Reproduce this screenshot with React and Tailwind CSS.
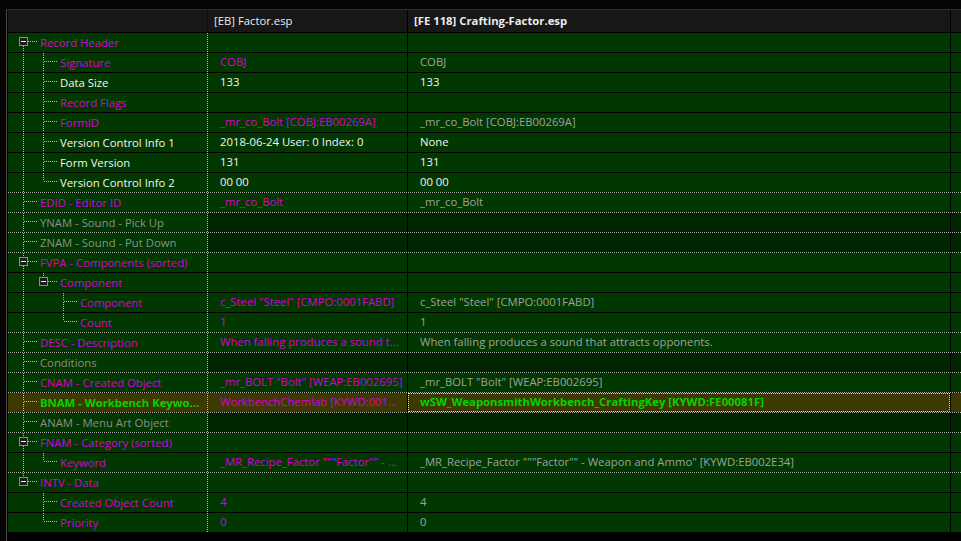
import React from "react";

const M = "text-[#d800d8]";
const W = "text-[#f4f4f4]";
const G = "text-[#a0a0a0]";
const L = "text-[#8e8e8e]";
const GB = "text-[#00d400] font-bold";

const ROWS = [
  { d: 0, label: "Record Header", lc: M },
  { d: 1, label: "Signature", lc: M, v2: "COBJ", c2: M, v3: "COBJ", c3: G },
  { d: 1, label: "Data Size", lc: W, v2: "133", c2: W, v3: "133", c3: W },
  { d: 1, label: "Record Flags", lc: M },
  { d: 1, label: "FormID", lc: M, v2: "_mr_co_Bolt [COBJ:EB00269A]", c2: M, v3: "_mr_co_Bolt [COBJ:EB00269A]", c3: G },
  { d: 1, label: "Version Control Info 1", lc: W, v2: "2018-06-24 User: 0 Index: 0", c2: W, v3: "None", c3: W },
  { d: 1, label: "Form Version", lc: W, v2: "131", c2: W, v3: "131", c3: W },
  { d: 1, label: "Version Control Info 2", lc: W, v2: "00 00", c2: W, v3: "00 00", c3: W },
  { d: 0, label: "EDID - Editor ID", lc: M, v2: "_mr_co_Bolt", c2: M, v3: "_mr_co_Bolt", c3: G },
  { d: 0, label: "YNAM - Sound - Pick Up", lc: L, dim: true },
  { d: 0, label: "ZNAM - Sound - Put Down", lc: L, dim: true },
  { d: 0, label: "FVPA - Components (sorted)", lc: M },
  { d: 1, label: "Component", lc: M },
  { d: 2, label: "Component", lc: M, v2: 'c_Steel "Steel" [CMPO:0001FABD]', c2: M, v3: 'c_Steel "Steel" [CMPO:0001FABD]', c3: G },
  { d: 2, label: "Count", lc: M, v2: "1", c2: M, v3: "1", c3: G },
  {
    d: 0,
    label: "DESC - Description",
    lc: M,
    v2: "When falling produces a sound t...",
    c2: M,
    v3: "When falling produces a sound that attracts opponents.",
    c3: G,
  },
  { d: 0, label: "Conditions", lc: L, dim: true },
  { d: 0, label: "CNAM - Created Object", lc: M, v2: '_mr_BOLT "Bolt" [WEAP:EB002695]', c2: M, v3: '_mr_BOLT "Bolt" [WEAP:EB002695]', c3: G },
  {
    d: 0,
    label: "BNAM - Workbench Keywo...",
    lc: GB,
    v2: "WorkbenchChemlab [KYWD:001...",
    c2: M,
    v3: "wSW_WeaponsmithWorkbench_CraftingKey [KYWD:FE00081F]",
    c3: GB,
    hot: true,
  },
  { d: 0, label: "ANAM - Menu Art Object", lc: L, dim: true },
  { d: 0, label: "FNAM - Category (sorted)", lc: M },
  {
    d: 1,
    label: "Keyword",
    lc: M,
    v2: '_MR_Recipe_Factor """Factor"" - ...',
    c2: M,
    v3: '_MR_Recipe_Factor """Factor"" - Weapon and Ammo" [KYWD:EB002E34]',
    c3: G,
  },
  { d: 0, label: "INTV - Data", lc: M },
  { d: 1, label: "Created Object Count", lc: M, v2: "4", c2: M, v3: "4", c3: G },
  { d: 1, label: "Priority", lc: M, v2: "0", c2: M, v3: "0", c3: G },
];

function hasNextSibling(i) {
  const d = ROWS[i].d;
  for (let j = i + 1; j < ROWS.length; j++) {
    if (ROWS[j].d < d) return false;
    if (ROWS[j].d === d) return true;
  }
  return false;
}

function ancestorAt(i, depth) {
  for (let j = i - 1; j >= 0; j--) if (ROWS[j].d === depth) return j;
  return -1;
}

const DOT = "1 1";
const LINE = "#bcbcbc";

// tree connector drawing for the first column
function TreeLines({ i }) {
  const { d } = ROWS[i];
  const open = i + 1 < ROWS.length && ROWS[i + 1].d > d;
  const next = hasNextSibling(i);
  const w = 32 + 20 * d;
  const cx = 15.5 + 20 * d;
  const lines = [];

  for (let c = 0; c < d; c++) {
    const a = ancestorAt(i, c);
    if (a >= 0 && hasNextSibling(a)) {
      const x = 15.5 + 20 * c;
      lines.push(<line key={"a" + c} x1={x} y1={0} x2={x} y2={19} stroke={LINE} strokeDasharray={DOT} />);
    }
  }
  if (i > 0) lines.push(<line key="up" x1={cx} y1={0} x2={cx} y2={8} stroke={LINE} strokeDasharray={DOT} />);
  if (next) lines.push(<line key="dn" x1={cx} y1={9} x2={cx} y2={19} stroke={LINE} strokeDasharray={DOT} />);
  lines.push(<line key="h" x1={cx + 0.5} y1={8.5} x2={30 + 20 * d} y2={8.5} stroke={LINE} strokeDasharray={DOT} />);

  return (
    <svg width={w} height={19} className="shrink-0">
      {lines}
      {open && (
        <g>
          <rect x={11.5 + 20 * d} y={4.5} width={8} height={8} fill="#1c1c1c" stroke="#8e8e8e" />
          <line x1={13 + 20 * d} y1={8.5} x2={18 + 20 * d} y2={8.5} stroke="#f0f0f0" />
        </g>
      )}
    </svg>
  );
}

function Row({ row, i }) {
  const last = i === ROWS.length - 1;
  const dotted = !last && ROWS[i + 1].d === 0;
  const base = row.hot ? "bg-[#3e3900]" : "bg-[#003800]";
  const side = row.hot ? "bg-[#3e3900]" : row.dim ? "bg-[#002600]" : "bg-[#003800]";
  const edge = dotted ? "border-b border-dotted border-[#b4b4b4]" : "border-b border-black";

  return (
    <div className={`flex h-[20px] ${edge} bg-black`}>
      <div className={`w-[199px] flex items-center overflow-hidden whitespace-nowrap ${base} ${row.lc}`}>
        <TreeLines i={i} />
        <span className="leading-[19px]">{row.label}</span>
      </div>
      <div className={`w-px border-l border-dotted border-[#b4b4b4] ${base}`} />
      <div className={`w-[199px] flex items-center pl-[12px] overflow-hidden whitespace-nowrap ${side} ${row.c2 || ""}`}>
        {row.v2}
      </div>
      <div className="w-px bg-black" />
      <div
        className={`w-[542px] flex items-center overflow-hidden whitespace-nowrap ${side} ${row.c3 || ""} ${
          row.hot ? "border border-dotted border-[#d8d8d8] pl-[11px]" : "pl-[12px]"
        }`}
      >
        {row.v3}
      </div>
      <div className="w-px bg-black" />
      <div className={`flex-1 ${side}`} />
    </div>
  );
}

export default function App() {
  return (
    <div className="w-full h-[541px] bg-[#050505] pl-[6px] pt-[9px] flex font-['Open_Sans',sans-serif] text-[11.3px] overflow-hidden">
      <div className="flex-1 flex flex-col border-l border-t border-l-[#4a4a4a] border-t-[#2c2c2c] bg-black pl-px">
        <div className="flex h-[23px] border-b border-black bg-black text-[#ececec]">
          <div className="w-[199px] bg-[#171717]" />
          <div className="w-px bg-[#0c0c0c]" />
          <div className="w-[199px] flex items-center pl-[6px] bg-[#171717]">[EB] Factor.esp</div>
          <div className="w-px bg-black" />
          <div className="w-[542px] flex items-center pl-[6px] bg-[#171717] font-bold">[FE 118] Crafting-Factor.esp</div>
          <div className="w-px bg-black" />
          <div className="flex-1 bg-[#171717]" />
        </div>
        {ROWS.map((row, i) => (
          <Row key={i} row={row} i={i} />
        ))}
      </div>
    </div>
  );
}
